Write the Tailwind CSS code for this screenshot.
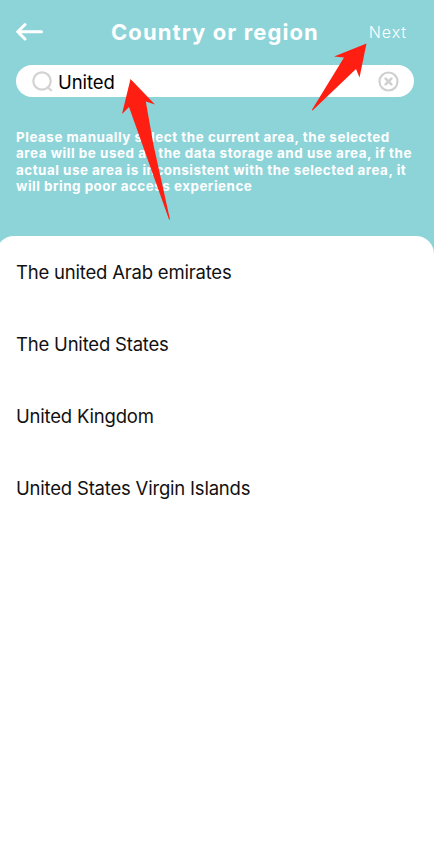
<!DOCTYPE html>
<html lang="en">

<head>
  <meta charset="UTF-8">
  <meta name="viewport" content="width=device-width, initial-scale=1.0">
  <title>Country or region</title>
  <script src="https://cdn.jsdelivr.net/npm/@tailwindcss/browser@4"></script>
</head>

<body class="bg-white font-['Inter',sans-serif]">
  <div class="relative flex flex-col w-[434px] h-[867px] overflow-hidden bg-[#8dd4d9]">
    <!-- Header -->
    <header class="flex items-center h-16 pl-4 pr-7 text-white">
      <button class="w-7 shrink-0" aria-label="Back">
        <svg class="w-7 h-5" viewBox="0 0 28 20" fill="none" stroke="currentColor" stroke-width="3" stroke-linecap="round" stroke-linejoin="round">
          <path d="M9 2.500L1.700 9.700L9 17M2 9.700H25.500"/>
        </svg>
      </button>
      <h1 class="ml-[67px] w-[210px] whitespace-nowrap text-[22px] leading-8 font-bold tracking-[1.1px]">Country or region</h1>
      <a href="#" class="ml-auto -mr-px whitespace-nowrap text-base font-light tracking-[0.9px]">Next</a>
    </header>

    <!-- Search -->
    <div class="flex items-center shrink-0 mx-4 mt-px pl-4 pr-[15px] h-8 w-[398px] rounded-full bg-white">
      <svg class="w-[21px] h-[21px]" viewBox="0 0 21 21" fill="none" stroke="#d3d3d3" stroke-width="2.2" stroke-linecap="round">
        <circle cx="10" cy="10" r="8.7"/>
        <path d="M16.500 17L19 19.300"/>
      </svg>
      <span class="ml-[5px] pt-[2px] text-[18.5px] leading-8 text-black tracking-[-0.05px]">United</span>
      <svg class="ml-auto w-[21px] h-[21px]" viewBox="0 0 21 21" fill="none" stroke="#d0d0d0" stroke-width="2.2" stroke-linecap="round">
        <circle cx="10.5" cy="10.5" r="9"/>
        <path d="M7.600 7.600L13.400 13.400M13.400 7.600L7.600 13.400" stroke-width="2.6"/>
      </svg>
    </div>

    <p class="mt-8 ml-4 h-[66px] whitespace-nowrap text-[13.4px] leading-[16.4px] font-bold text-white">
      <span class="block tracking-[0.54px]">Please manually select the current area, the selected</span>
      <span class="block tracking-[0.54px]">area will be used as the data storage and use area, if the</span>
      <span class="block tracking-[0.51px]">actual use area is inconsistent with the selected area, it</span>
      <span class="block tracking-[0.51px]">will bring poor access experience</span>
    </p>

    <!-- Results -->
    <ul class="flex-1 mt-[41px] -ml-1 rounded-t-[18px] bg-white pl-5 pr-4 text-[18.5px] tracking-[-0.2px] text-[#111]">
      <li class="flex items-center h-[72px] pt-[2px]">The united Arab emirates</li>
      <li class="flex items-center h-[72px] pt-[2px]">The United States</li>
      <li class="flex items-center h-[72px] pt-[2px]">United Kingdom</li>
      <li class="flex items-center h-[72px] pt-[2px]">United States Virgin Islands</li>
    </ul>

    <!-- Pointer arrows -->
    <svg class="absolute inset-0 pointer-events-none" width="434" height="260" viewBox="0 0 434 260" fill="#ff1f12">
      <path d="M130.500 79L155 104.500L145.800 101.500L153.500 145L170 219.500H169L129 107L122 114Z"/>
      <path d="M366.500 43.500L359.500 77.500L356 69L312.500 110.500L311.800 110L344 57.500L334 56.500Z"/>
    </svg>
  </div>
</body>

</html>
